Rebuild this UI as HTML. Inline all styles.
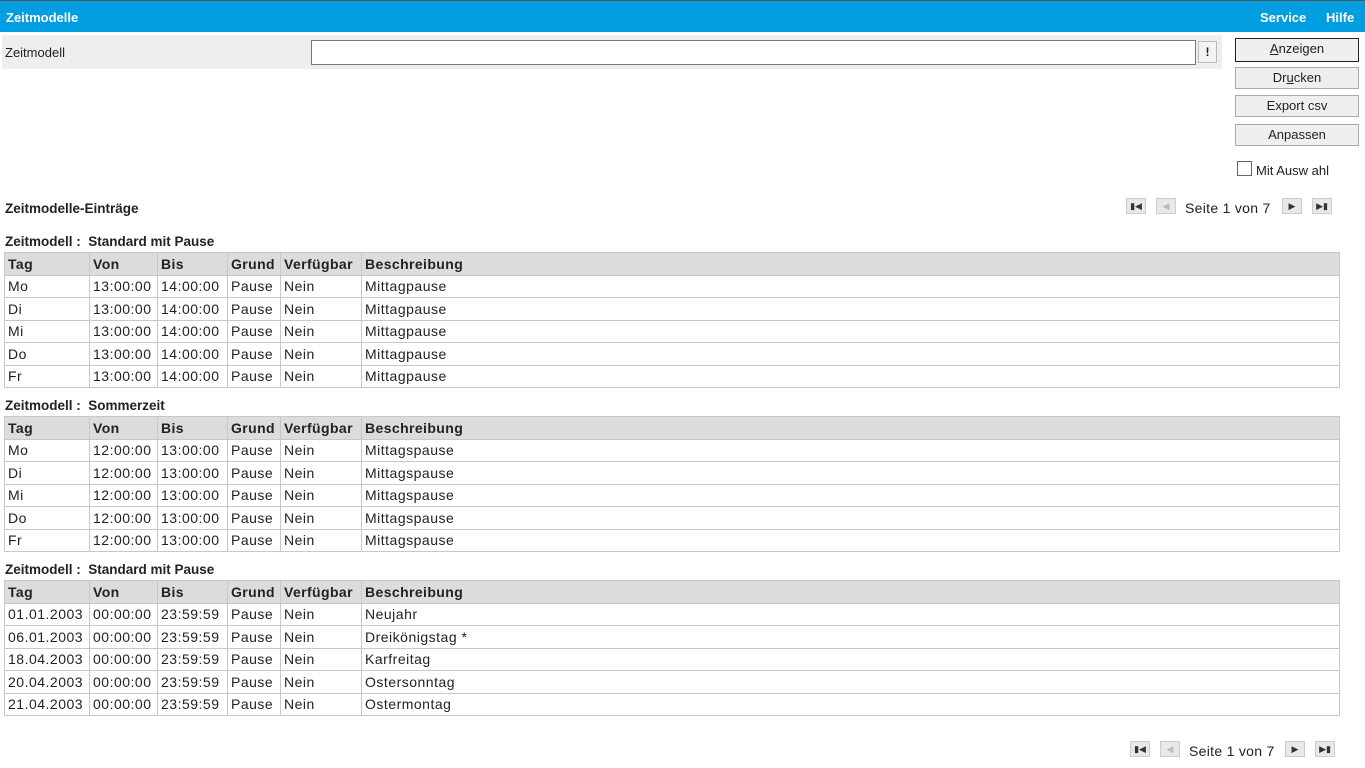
<!DOCTYPE html>
<html><head><meta charset="utf-8"><style>
body{margin:0;width:1365px;height:768px;position:relative;background:#fff;font-family:"Liberation Sans",sans-serif;font-size:14px;color:#222;overflow:hidden}
.a{position:absolute}
.top{left:0;top:0;width:1365px;height:32px;background:#009ee0;border-top:1px solid #555;box-sizing:border-box}
.top b{position:absolute;color:#fff;font-size:13px;top:9px}
.btn{position:absolute;left:1235px;width:124px;height:22px;background:#efefef;border:1px solid #aaa;box-sizing:border-box;text-align:center;font-size:13px;line-height:20px}
table{position:absolute;left:4px;width:1336px;border-collapse:collapse;table-layout:fixed}
td,th{border:1px solid #c8c8c8;height:21.5px;padding:0 0 0 3px;text-align:left;font-size:14px;white-space:nowrap;overflow:hidden;line-height:20px;letter-spacing:0.5px}
th{background:#dcdcdc;font-weight:bold;color:#222;letter-spacing:0.4px}
.h{font-weight:bold;font-size:13.5px;left:5px}
.pg{position:absolute;width:20px;height:16px;background:#e8e8e8;border:1px solid #ccc;box-sizing:border-box;font-size:9px;line-height:14px;text-align:center;color:#333}
</style></head><body>
<div class="a top"><b style="left:6px">Zeitmodelle</b><b style="left:1260px">Service</b><b style="left:1326px">Hilfe</b></div>
<div class="a" style="left:2px;top:35px;width:1220px;height:34px;background:#eee"></div>
<div class="a" style="left:5px;top:45px;font-size:13px">Zeitmodell</div>
<div class="a" style="left:311px;top:40px;width:885px;height:25px;border:1px solid #777;box-sizing:border-box;background:#fff"></div>
<div class="a" style="left:1198px;top:41px;width:19px;height:22px;border:1px solid #bbb;box-sizing:border-box;background:#f3f3f3;font-weight:bold;font-size:12px;text-align:center;line-height:20px">!</div>
<div class="btn" style="top:38px;height:24px;border:1.5px solid #222"><u>A</u>nzeigen</div>
<div class="btn" style="top:67px">Dr<u>u</u>cken</div>
<div class="btn" style="top:95px">Export csv</div>
<div class="btn" style="top:124px">Anpassen</div>
<div class="a" style="left:1237px;top:161px;width:15px;height:15px;border:1px solid #666;box-sizing:border-box"></div>
<div class="a" style="left:1256px;top:163px;font-size:13px">Mit Ausw ahl</div>
<div class="a h" style="top:201px">Zeitmodelle-Einträge</div>
<div class="pg" style="left:1126px;top:198px">▮◀</div><div class="pg" style="left:1156px;top:198px;color:#bbb">◀</div>
<div class="a" style="left:1185px;top:200px;letter-spacing:0.3px">Seite 1 von 7</div>
<div class="pg" style="left:1282px;top:198px">▶</div><div class="pg" style="left:1312px;top:198px">▶▮</div>

<div class="a h" style="top:234px">Zeitmodell :&nbsp; Standard mit Pause</div>
<table style="top:252px"><colgroup><col style="width:85px"><col style="width:68px"><col style="width:70px"><col style="width:53px"><col style="width:81px"><col></colgroup>
<tr><th>Tag</th><th>Von</th><th>Bis</th><th>Grund</th><th>Verfügbar</th><th>Beschreibung</th></tr>
<tr><td>Mo</td><td>13:00:00</td><td>14:00:00</td><td>Pause</td><td>Nein</td><td>Mittagpause</td></tr>
<tr><td>Di</td><td>13:00:00</td><td>14:00:00</td><td>Pause</td><td>Nein</td><td>Mittagpause</td></tr>
<tr><td>Mi</td><td>13:00:00</td><td>14:00:00</td><td>Pause</td><td>Nein</td><td>Mittagpause</td></tr>
<tr><td>Do</td><td>13:00:00</td><td>14:00:00</td><td>Pause</td><td>Nein</td><td>Mittagpause</td></tr>
<tr><td>Fr</td><td>13:00:00</td><td>14:00:00</td><td>Pause</td><td>Nein</td><td>Mittagpause</td></tr></table>

<div class="a h" style="top:398px">Zeitmodell :&nbsp; Sommerzeit</div>
<table style="top:416px"><colgroup><col style="width:85px"><col style="width:68px"><col style="width:70px"><col style="width:53px"><col style="width:81px"><col></colgroup>
<tr><th>Tag</th><th>Von</th><th>Bis</th><th>Grund</th><th>Verfügbar</th><th>Beschreibung</th></tr>
<tr><td>Mo</td><td>12:00:00</td><td>13:00:00</td><td>Pause</td><td>Nein</td><td>Mittagspause</td></tr>
<tr><td>Di</td><td>12:00:00</td><td>13:00:00</td><td>Pause</td><td>Nein</td><td>Mittagspause</td></tr>
<tr><td>Mi</td><td>12:00:00</td><td>13:00:00</td><td>Pause</td><td>Nein</td><td>Mittagspause</td></tr>
<tr><td>Do</td><td>12:00:00</td><td>13:00:00</td><td>Pause</td><td>Nein</td><td>Mittagspause</td></tr>
<tr><td>Fr</td><td>12:00:00</td><td>13:00:00</td><td>Pause</td><td>Nein</td><td>Mittagspause</td></tr></table>

<div class="a h" style="top:562px">Zeitmodell :&nbsp; Standard mit Pause</div>
<table style="top:580px"><colgroup><col style="width:85px"><col style="width:68px"><col style="width:70px"><col style="width:53px"><col style="width:81px"><col></colgroup>
<tr><th>Tag</th><th>Von</th><th>Bis</th><th>Grund</th><th>Verfügbar</th><th>Beschreibung</th></tr>
<tr><td>01.01.2003</td><td>00:00:00</td><td>23:59:59</td><td>Pause</td><td>Nein</td><td>Neujahr</td></tr>
<tr><td>06.01.2003</td><td>00:00:00</td><td>23:59:59</td><td>Pause</td><td>Nein</td><td>Dreikönigstag *</td></tr>
<tr><td>18.04.2003</td><td>00:00:00</td><td>23:59:59</td><td>Pause</td><td>Nein</td><td>Karfreitag</td></tr>
<tr><td>20.04.2003</td><td>00:00:00</td><td>23:59:59</td><td>Pause</td><td>Nein</td><td>Ostersonntag</td></tr>
<tr><td>21.04.2003</td><td>00:00:00</td><td>23:59:59</td><td>Pause</td><td>Nein</td><td>Ostermontag</td></tr></table>

<div class="pg" style="left:1130px;top:741px">▮◀</div><div class="pg" style="left:1160px;top:741px;color:#bbb">◀</div>
<div class="a" style="left:1189px;top:743px;letter-spacing:0.3px">Seite 1 von 7</div>
<div class="pg" style="left:1285px;top:741px">▶</div><div class="pg" style="left:1315px;top:741px">▶▮</div>
</body></html>
